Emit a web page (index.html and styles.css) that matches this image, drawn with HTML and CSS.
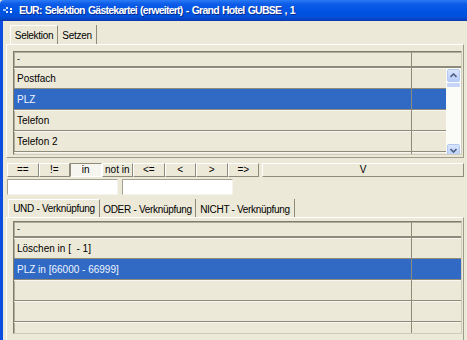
FILE: index.html
```html
<!DOCTYPE html>
<html lang="de">
<head>
    <meta charset="UTF-8">
    <title>EUR: Selektion Gästekartei (erweitert)</title>
    <link rel="stylesheet" href="styles.css">
</head>
<body>
    <div class="titlebar">
        <svg class="app-icon" width="12" height="10" viewBox="0 0 12 10">
            <rect x="0" y="4" width="3" height="2" fill="#9fc3ff"/>
            <rect x="3" y="2" width="2" height="2" fill="#d6e6ff"/>
            <rect x="3" y="6" width="2" height="2" fill="#d6e6ff"/>
            <rect x="7" y="3" width="2" height="2" fill="#ffffff"/>
            <rect x="7" y="6" width="2" height="2" fill="#ffffff"/>
        </svg>
        <span class="title">EUR: Selektion Gästekartei (erweitert) - Grand Hotel GUBSE , 1</span>
    </div>

    <div class="client">
        <div class="tabs tabs-top">
            <div class="tab active" style="width: 48px">Selektion</div>
            <div class="tab" style="width: 39px">Setzen</div>
        </div>
        <div class="panel panel-top">
            <div class="grid grid-top">
                <div class="row head"><div class="c1">-</div><div class="c2"></div></div>
                <div class="body">
                    <div class="rows">
                        <div class="row"><div class="c1">Postfach</div><div class="c2"></div></div>
                        <div class="row selected"><div class="c1">PLZ</div><div class="c2"></div></div>
                        <div class="row"><div class="c1">Telefon</div><div class="c2"></div></div>
                        <div class="row"><div class="c1">Telefon 2</div><div class="c2"></div></div>
                        <div class="row"><div class="c1"></div><div class="c2"></div></div>
                    </div>
                    <div class="scrollbar">
                        <div class="arrow">
                            <svg width="7" height="5" viewBox="0 0 7 5"><path d="M0.5 4 L3.5 1 L6.5 4" fill="none" stroke="#4d6185" stroke-width="1.6"/></svg>
                        </div>
                        <div class="thumb"></div>
                        <div class="track"></div>
                        <div class="arrow">
                            <svg width="7" height="5" viewBox="0 0 7 5"><path d="M0.5 1 L3.5 4 L6.5 1" fill="none" stroke="#4d6185" stroke-width="1.6"/></svg>
                        </div>
                    </div>
                </div>
            </div>
        </div>

        <div class="ops">
            <button class="op">==</button>
            <button class="op">!=</button>
            <button class="op pressed">in</button>
            <button class="op">not in</button>
            <button class="op">&lt;=</button>
            <button class="op">&lt;</button>
            <button class="op">&gt;</button>
            <button class="op">=&gt;</button>
            <button class="op op-wide">V</button>
        </div>

        <div class="inputs">
            <input type="text" class="field">
            <input type="text" class="field">
        </div>

        <div class="tabs tabs-bottom">
            <div class="tab active" style="width: 92px">UND - Verknüpfung</div>
            <div class="tab" style="width: 96px">ODER - Verknüpfung</div>
            <div class="tab" style="width: 99px">NICHT - Verknüpfung</div>
        </div>
        <div class="panel panel-bottom">
            <div class="grid grid-bottom">
                <div class="row head"><div class="c1">-</div><div class="c2"></div></div>
                <div class="row"><div class="c1">Löschen in [ &nbsp;- 1]</div><div class="c2"></div></div>
                <div class="row selected"><div class="c1">PLZ in [66000 - 66999]</div><div class="c2"></div></div>
                <div class="row"><div class="c1"></div><div class="c2"></div></div>
                <div class="row"><div class="c1"></div><div class="c2"></div></div>
                <div class="row"><div class="c1"></div><div class="c2"></div></div>
            </div>
        </div>
    </div>
</body>
</html>
```

FILE: styles.css
```css
* {
    box-sizing: border-box;
}

body {
    margin: 0;
    width: 467px;
    height: 340px;
    overflow: hidden;
    background: #ece9d8;
    font-family: "Liberation Sans", Arial, sans-serif;
    font-size: 10px;
    color: #000;
}

.titlebar {
    height: 21px;
    display: flex;
    align-items: center;
    gap: 4px;
    padding-left: 3px;
    background: linear-gradient(#2a7af7 0%, #0d5ce8 20%, #0054e3 55%, #0050d8 85%, #0640c0 100%);
    border-bottom: 1px solid #0a3cb0;
    border-top-left-radius: 4px;
}

.title {
    color: #fff;
    font-weight: bold;
    font-size: 10.5px;
    letter-spacing: -0.75px;
    word-spacing: 1px;
    text-shadow: 1px 1px 0 #0a2a8a;
    white-space: nowrap;
}

.client {
    border-left: 3px solid #0b4ee0;
    padding: 4px 3px 0 3px;
    height: 319px;
}

/* tabs */
.tabs {
    display: flex;
    height: 19px;
}

.tabs-top {
    margin-left: 4px;
}

.tabs-bottom {
    margin-left: 2px;
    margin-top: 4px;
    height: 18px;
}

.tab {
    display: flex;
    align-items: center;
    justify-content: center;
    white-space: nowrap;
    letter-spacing: -0.3px;
    border-right: 1px solid #8e8b7b;
    padding-top: 2px;
}

.tab.active {
    border-left: 1px solid #fff;
    border-top: 1px solid #fff;
    padding-top: 0;
}

.panel {
    border: 1px solid;
    border-color: #fff #9d9a8a #9d9a8a #fff;
    padding: 6px 1px 2px 6px;
}

.panel-bottom {
    padding-top: 3px;
    height: 130px;
}

/* grids */
.grid {
    border: 1px solid;
    border-color: #7f7c6c #cfccbc #cfccbc #7f7c6c;
    box-shadow: inset 1px 1px 0 #b0ad9d;
    overflow: hidden;
}

.grid-top {
    height: 104px;
}

.grid-bottom {
    height: 113px;
}

.row {
    display: flex;
    height: 21px;
    border-bottom: 1px solid #8e8b7b;
    box-shadow: inset 0 1px 0 #f7f6f0;
}

.row.head {
    height: 16px;
    border-bottom: 2px solid #8e8b7b;
    box-shadow: none;
    font-size: 9px;
}

.c1 {
    flex: 1;
    display: flex;
    align-items: center;
    padding-left: 3px;
    border-right: 1px solid #8e8b7b;
    white-space: nowrap;
}

.c2 {
    width: 49px;
}

.grid-top .rows .c2 {
    width: 34px;
}

.row.selected {
    background: #316ac5;
    color: #f0f4ff;
    box-shadow: none;
}

.body {
    display: flex;
}

.rows {
    flex: 1;
}

.scrollbar {
    width: 15px;
    display: flex;
    flex-direction: column;
    align-items: center;
    padding-top: 1px;
    background: #fbfbf8;
}

.arrow {
    width: 13px;
    height: 13px;
    display: flex;
    align-items: center;
    justify-content: center;
    background: linear-gradient(#d9e5fd, #b8cdf8);
    border: 1px solid #b4c8f0;
    border-radius: 2px;
}

.thumb {
    width: 13px;
    height: 4px;
    margin-top: 1px;
    background: #c6d5f7;
    border-radius: 1px;
}

.track {
    height: 57px;
}

/* operator buttons */
.ops {
    display: flex;
    margin: 5px 0 0 1px;
    height: 14px;
}

.op {
    width: 31.5px;
    padding: 0;
    margin: 0;
    font-family: "Liberation Sans", Arial, sans-serif;
    font-size: 10px;
    line-height: 12px;
    color: #000;
    background: #ece9d8;
    border: 1px solid;
    border-color: #fff #8e8b7b #8e8b7b #fff;
}

.op.pressed {
    background: #f6f5ef;
    border-color: #8e8b7b #fff #fff #8e8b7b;
}

.op-wide {
    flex: 1;
    margin-left: 3px;
}

/* inputs */
.inputs {
    display: flex;
    gap: 4px;
    margin: 2px 0 0 1px;
}

.field {
    width: 111px;
    height: 16px;
    margin: 0;
    background: #fff;
    border: 1px solid;
    border-color: #a5a294 #f4f3ee #f4f3ee #a5a294;
}
```
